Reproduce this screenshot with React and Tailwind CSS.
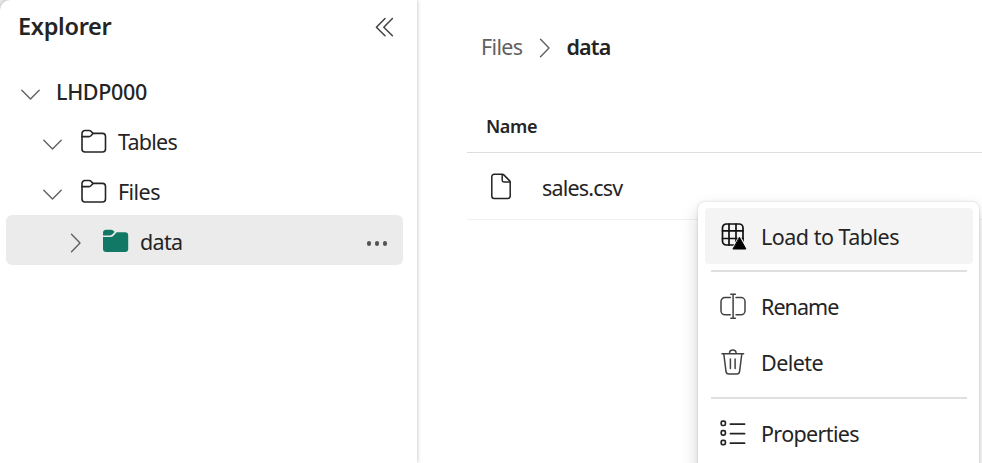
import React from 'react';

const stroke = { fill: 'none', strokeLinecap: 'round', strokeLinejoin: 'round' };

function ChevronDown() {
  return (
    <svg className="h-[50px] w-[22px] shrink-0" viewBox="0 0 22 50" {...stroke} stroke="#616161" strokeWidth="1.4">
      <path d="M1.8 25.2 10.5 34l8.7-8.8" />
    </svg>
  );
}

function ChevronRight({ className }) {
  return (
    <svg className={className} viewBox="0 0 12 20" {...stroke} stroke="#616161" strokeWidth="1.4">
      <path d="M1.5 1.2 10 10l-8.5 8.8" />
    </svg>
  );
}

function Folder() {
  return (
    <svg className="mt-[1px] h-6 w-[26px] shrink-0" viewBox="0 0 26 24" {...stroke} stroke="#242424" strokeWidth="1.6">
      <path d="M1 7.5V4.5a3 3 0 0 1 3-3h4.2c.7 0 1.2.3 1.7.7L12 4.4h9.5a3 3 0 0 1 3 3V20a3 3 0 0 1-3 3H4a3 3 0 0 1-3-3Z" />
      <path d="M1 7.6h7.1c.7 0 1.3-.3 1.8-.8L12 4.5" />
    </svg>
  );
}

function FolderFilled() {
  return (
    <svg className="mt-[1px] h-6 w-[26px] shrink-0" viewBox="0 0 26 24" fill="#117865">
      <path d="M0 6.4V4a3.3 3.3 0 0 1 3.3-3.3H8c.9 0 1.6.3 2.2.8l1.5 1.4-2.6 2.7c-.5.5-1 .8-1.7.8Z" />
      <path d="M0 8h7.6c1 0 1.9-.4 2.6-1.1l3.5-3.6H22a3.2 3.2 0 0 1 3.2 3.2v13.3a3.2 3.2 0 0 1-3.2 3.2H3.3A3.3 3.3 0 0 1 0 19.7Z" />
    </svg>
  );
}

function LoadIcon() {
  return (
    <svg className="h-7 w-7 shrink-0" viewBox="0 0 28 28" {...stroke} stroke="#111" strokeWidth="1.7">
      <rect x="2.5" y="2" width="20.5" height="21" rx="3.8" />
      <path d="M9 2v21M16 2v21M2.5 8.8H23M2.5 16.5H23" />
      <path d="M19.6 15.2 26.5 27.4H12.7Z" fill="#000" stroke="#f4f4f4" strokeWidth="2.6" />
      <path d="M19.6 15.6 25.9 27H13.3Z" fill="#000" stroke="#000" strokeWidth="1" />
    </svg>
  );
}

function RenameIcon() {
  return (
    <svg className="h-7 w-7 shrink-0" viewBox="0 0 28 28" {...stroke} stroke="#424242" strokeWidth="1.5">
      <path d="M10.3 4.5H5a4 4 0 0 0-4 4v9.3a4 4 0 0 0 4 4h5.3M16 4.5h5a4 4 0 0 1 4 4v9.3a4 4 0 0 1-4 4h-5M13.1 1.3v24M10.8 1.3h4.6M10.8 25.3h4.6" />
    </svg>
  );
}

function DeleteIcon() {
  return (
    <svg className="h-7 w-7 shrink-0" viewBox="0 0 28 28" {...stroke} stroke="#424242" strokeWidth="1.5">
      <path d="M2 4.8h21.6M9.5 4.6V4.2a3.3 3.3 0 0 1 6.6 0v.4M3.8 5l2.2 17.3A3 3 0 0 0 9 25.1h7.6a3 3 0 0 0 3-2.8L21.8 5M10.4 10.1v9.4M15.1 10.1v9.4" />
    </svg>
  );
}

function PropertiesIcon() {
  return (
    <svg className="h-7 w-7 shrink-0" viewBox="0 0 28 28" {...stroke} stroke="#242424" strokeWidth="1.7">
      <rect x="1.2" y="1.1" width="4.2" height="4.4" rx="1.5" />
      <rect x="1.2" y="10.7" width="4.2" height="4.4" rx="1.5" />
      <rect x="1.2" y="20.3" width="4.2" height="4.4" rx="1.5" />
      <path d="M10.4 4.1h14.2M10.4 13.6h14.2M10.4 23.2h14.2" />
    </svg>
  );
}

function MenuItem({ icon, label, className = '', textClass = 'tracking-[-0.6px]' }) {
  return (
    <div className={`flex h-14 items-center gap-[13px] rounded-[4px] pl-[15px] ${className}`}>
      {icon}
      <span className={textClass}>{label}</span>
    </div>
  );
}

export default function App() {
  return (
    <div className="relative flex h-[463px] w-[982px] overflow-hidden bg-[#ebebeb] font-['Noto_Sans','Open_Sans',sans-serif] text-[21.5px] leading-[30px] text-[#242424]">
      <aside className="z-10 w-[417px] shrink-0 rounded-tl-[10px] bg-white px-1.5 shadow-[0_0_4px_rgba(0,0,0,0.28)]">
        <div className="flex h-[65px] items-start justify-between pt-[11px] pr-[17px] pl-3">
          <h1 className="text-[23.5px] font-semibold tracking-[-0.3px]">Explorer</h1>
          <svg className="mt-[6px] h-5 w-[19px]" viewBox="0 0 19 20" {...stroke} stroke="#424242" strokeWidth="1.5">
            <path d="M10 1.5 1.4 10.2l8.6 8.6M17.4 1.5l-8.6 8.7 8.6 8.6" />
          </svg>
        </div>
        <div className="flex h-[50px] items-center pl-[14px]">
          <ChevronDown />
          <span className="mt-[4px] ml-[14px] font-medium tracking-[-0.35px]">LHDP000</span>
        </div>
        <div className="flex h-[50px] items-center pl-[36px]">
          <ChevronDown />
          <span className="ml-[17px] flex"><Folder /></span>
          <span className="mt-[4px] ml-[11px] tracking-[-0.75px]">Tables</span>
        </div>
        <div className="flex h-[50px] items-center pl-[36px]">
          <ChevronDown />
          <span className="ml-[17px] flex"><Folder /></span>
          <span className="mt-[4px] ml-[11px] tracking-[-0.55px]">Files</span>
        </div>
        <div className="mr-2 flex h-[50px] items-center rounded-[6px] bg-[#ebebeb] pl-16">
          <ChevronRight className="mt-[6px] h-5 w-3 shrink-0" />
          <span className="ml-[21px] flex"><FolderFilled /></span>
          <span className="mt-[4px] ml-[11px] tracking-[-0.7px]">data</span>
          <span className="mt-[7px] mr-[16px] ml-auto flex gap-[3.6px]">
            <i className="h-[4.2px] w-[4.2px] rounded-full bg-[#555]" />
            <i className="h-[4.2px] w-[4.2px] rounded-full bg-[#555]" />
            <i className="h-[4.2px] w-[4.2px] rounded-full bg-[#555]" />
          </span>
        </div>
      </aside>

      <main className="flex-1 bg-white pl-[50px]">
        <nav className="flex h-[95px] items-center pl-[14px]">
          <span className="mt-[-2px] tracking-[-0.65px] text-[#616161]">Files</span>
          <ChevronRight className="mr-[15px] ml-[17px] h-5 w-3 shrink-0" />
          <span className="mt-[-2px] font-semibold tracking-[-0.8px]">data</span>
        </nav>
        <div className="flex h-[58px] items-center border-b border-[#dedede] pl-[19px] text-[18px] font-semibold">
          <span className="mt-[4px] tracking-[-0.4px]">Name</span>
        </div>
        <div className="flex h-[67px] items-center border-b border-[#f0f0f0] pl-[24px]">
          <svg className="h-[27px] w-5 shrink-0" viewBox="0 0 20 27" {...stroke} stroke="#242424" strokeWidth="1.5">
            <path d="M11.2 1.2H3.3a2.5 2.5 0 0 0-2.5 2.5v19.2a2.5 2.5 0 0 0 2.5 2.5h13.4a2.5 2.5 0 0 0 2.5-2.5V9.3c0-.7-.2-1.2-.7-1.7l-5.7-5.7a2.3 2.3 0 0 0-1.6-.7Z" />
            <path d="M11.2 1.4v5.8a1.7 1.7 0 0 0 1.7 1.7h6" />
          </svg>
          <span className="mt-[3px] ml-[31px] tracking-[-0.8px]">sales.csv</span>
        </div>
      </main>

      <div className="absolute top-[202px] left-[698px] z-20 h-[280px] w-[281px] rounded-[7px] bg-white px-[6px] pt-[6px] pl-[7px] shadow-[0_0_3px_rgba(0,0,0,0.16),0_8px_18px_rgba(0,0,0,0.18)]">
        <MenuItem className="bg-[#f4f4f4]" icon={<LoadIcon />} label="Load to Tables" textClass="mt-[2px] tracking-[-0.5px]" />
        <div className="mx-[6px] mt-[6px] mb-[7px] h-0.5 bg-[#e0e0e0]" />
        <MenuItem icon={<RenameIcon />} label="Rename" textClass="tracking-[-0.95px]" />
        <MenuItem icon={<DeleteIcon />} label="Delete" textClass="tracking-[-0.55px]" />
        <div className="mx-[6px] mt-[6px] mb-[7px] h-0.5 bg-[#e0e0e0]" />
        <MenuItem icon={<PropertiesIcon />} label="Properties" textClass="tracking-[-0.65px]" />
      </div>
    </div>
  );
}
